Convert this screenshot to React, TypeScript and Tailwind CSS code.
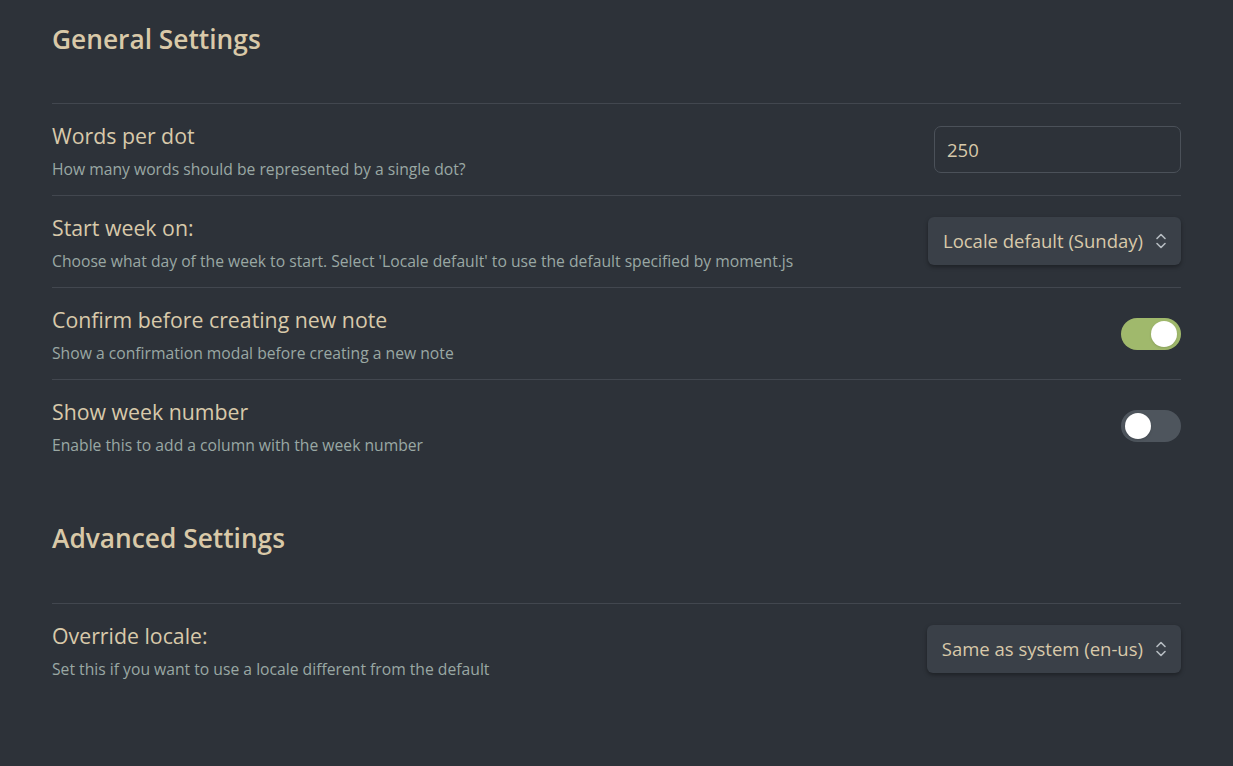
import React, { useState } from 'react';

const font = { fontFamily: '"Open Sans", "Noto Sans", sans-serif' };

const Chevrons = () => (
    <svg width="12" height="18" viewBox="0 0 12 18" fill="none" stroke="#b7bcc2" strokeWidth="1.6" strokeLinecap="round" strokeLinejoin="round">
        <path d="M2 6.5 L6 2.5 L10 6.5" />
        <path d="M2 11.5 L6 15.5 L10 11.5" />
    </svg>
);

const Toggle = ({ on, onClick }: { on: boolean; onClick: () => void }) => (
    <button
        onClick={onClick}
        className={`relative w-[60px] h-[32px] rounded-full flex items-center px-[4px] ${on ? 'bg-[#a0b96c] justify-end' : 'bg-[#4e555d] justify-start'}`}
    >
        <span className="block w-[26px] h-[26px] rounded-full bg-white shadow-sm" />
    </button>
);

const Row = ({ title, desc, children }: { title: string; desc: string; children: React.ReactNode }) => (
    <div className="h-[92px] flex items-center justify-between border-t border-[#42474f]">
        <div className="flex flex-col gap-[8px] pt-[2px]">
            <div className="text-[21.3px] leading-[28px] text-[#d8c9aa]">{title}</div>
            <div className="text-[15.7px] leading-[22px] text-[#9aa8a4]">{desc}</div>
        </div>
        {children}
    </div>
);

const Select = ({ value }: { value: string }) => (
    <div className="h-[48px] -mt-[2px] flex items-center gap-[12px] pl-[15px] pr-[14px] rounded-[6px] bg-[#3a4048] shadow-[0_2px_4px_rgba(0,0,0,0.35)] text-[18.5px] text-[#d8c9aa]">
        <span>{value}</span>
        <Chevrons />
    </div>
);

const App = () => {
    const [confirm, setConfirm] = useState(true);
    const [weekNum, setWeekNum] = useState(false);

    return (
        <div className="min-h-screen w-full bg-[#2d3239] px-[52px] pt-[21px] pb-[60px]" style={font}>
            <h2 className="text-[26.3px] leading-[36px] font-semibold text-[#d9c9a8] mb-[46px]">General Settings</h2>

            <Row title="Words per dot" desc="How many words should be represented by a single dot?">
                <input
                    defaultValue="250"
                    className="w-[247px] h-[47px] rounded-[7px] border border-[#4b5159] bg-transparent px-[12px] text-[18.5px] text-[#d8c9aa] outline-none"
                    style={font}
                />
            </Row>
            <Row title="Start week on:" desc="Choose what day of the week to start. Select 'Locale default' to use the default specified by moment.js">
                <Select value="Locale default (Sunday)" />
            </Row>
            <Row title="Confirm before creating new note" desc="Show a confirmation modal before creating a new note">
                <Toggle on={confirm} onClick={() => setConfirm(!confirm)} />
            </Row>
            <Row title="Show week number" desc="Enable this to add a column with the week number">
                <Toggle on={weekNum} onClick={() => setWeekNum(!weekNum)} />
            </Row>

            <h2 className="text-[26.3px] leading-[36px] font-semibold text-[#d9c9a8] mt-[49px] mb-[47px]">Advanced Settings</h2>

            <Row title="Override locale:" desc="Set this if you want to use a locale different from the default">
                <Select value="Same as system (en-us)" />
            </Row>
        </div>
    );
};

export default App;
